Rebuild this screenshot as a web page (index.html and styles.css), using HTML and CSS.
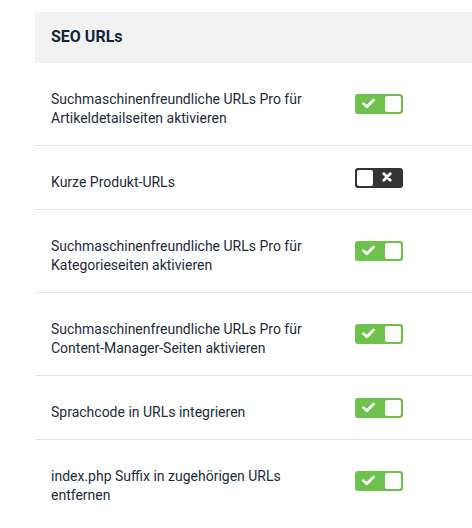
FILE: index.html
```html
<!DOCTYPE html>
<html lang="de">
<head>
<meta charset="utf-8">
<title>SEO URLs</title>
<link rel="stylesheet" href="styles.css">
</head>
<body>
<section class="panel">
  <h2 class="panel-title">SEO URLs</h2>
  <div class="row">
    <div class="label">Suchmaschinenfreundliche URLs Pro für Artikeldetailseiten aktivieren</div>
    <span class="toggle on"><svg class="icon" viewBox="0 0 12 10"><path d="M1.4 5.2 L4.5 8 L10.6 1.8" fill="none" stroke="#fff" stroke-width="2.6" stroke-linecap="round" stroke-linejoin="round"/></svg><span class="knob"></span></span>
  </div>
  <div class="row">
    <div class="label">Kurze Produkt-URLs</div>
    <span class="toggle off"><span class="knob"></span><svg class="icon x" viewBox="0 0 10 10"><path d="M1.8 1.8 L8.2 8.2 M8.2 1.8 L1.8 8.2" fill="none" stroke="#fff" stroke-width="2.8" stroke-linecap="round"/></svg></span>
  </div>
  <div class="row">
    <div class="label">Suchmaschinenfreundliche URLs Pro für Kategorieseiten aktivieren</div>
    <span class="toggle on"><svg class="icon" viewBox="0 0 12 10"><path d="M1.4 5.2 L4.5 8 L10.6 1.8" fill="none" stroke="#fff" stroke-width="2.6" stroke-linecap="round" stroke-linejoin="round"/></svg><span class="knob"></span></span>
  </div>
  <div class="row">
    <div class="label">Suchmaschinenfreundliche URLs Pro für Content-Manager-Seiten aktivieren</div>
    <span class="toggle on"><svg class="icon" viewBox="0 0 12 10"><path d="M1.4 5.2 L4.5 8 L10.6 1.8" fill="none" stroke="#fff" stroke-width="2.6" stroke-linecap="round" stroke-linejoin="round"/></svg><span class="knob"></span></span>
  </div>
  <div class="row">
    <div class="label">Sprachcode in URLs integrieren</div>
    <span class="toggle on"><svg class="icon" viewBox="0 0 12 10"><path d="M1.4 5.2 L4.5 8 L10.6 1.8" fill="none" stroke="#fff" stroke-width="2.6" stroke-linecap="round" stroke-linejoin="round"/></svg><span class="knob"></span></span>
  </div>
  <div class="row">
    <div class="label">index.php Suffix in zugehörigen URLs entfernen</div>
    <span class="toggle on"><svg class="icon" viewBox="0 0 12 10"><path d="M1.4 5.2 L4.5 8 L10.6 1.8" fill="none" stroke="#fff" stroke-width="2.6" stroke-linecap="round" stroke-linejoin="round"/></svg><span class="knob"></span></span>
  </div>
</section>
</body>
</html>
```
FILE: styles.css
```css
html, body {
  margin: 0;
  padding: 0;
  background: #ffffff;
}
body {
  font-family: Roboto, "Liberation Sans", sans-serif;
  color: #1d2b3a;
  overflow: hidden;
}
.panel {
  margin: 12px 0 0 35px;
}
.panel-title {
  margin: 0;
  height: 51px;
  box-sizing: border-box;
  background: #f2f2f2;
  padding: 0 16px;
  font-size: 16px;
  font-weight: 700;
  line-height: 50px;
  color: #13273a;
}
.row {
  display: flex;
  align-items: center;
  gap: 16px;
  padding: 17px 16px 17px 16px;
  border-bottom: 1px solid #e3e3e3;
}
.row:last-child {
  border-bottom: none;
}
.label {
  flex: 0 0 288px;
  font-size: 14px;
  line-height: 19px;
  padding-top: 10px;
  padding-bottom: 0;
}
.toggle {
  flex: 0 0 auto;
  width: 48px;
  height: 20px;
  box-sizing: border-box;
  border-radius: 3px;
  padding: 2px;
  display: flex;
  align-items: center;
}
.toggle.on {
  background: #6cc24a;
}
.toggle.off {
  background: #333333;
}
.knob {
  width: 16px;
  height: 16px;
  background: #ffffff;
  border-radius: 2px;
  margin-left: auto;
}
.toggle.off .knob {
  margin-left: 0;
}
.icon {
  width: 13px;
  height: 11px;
  margin-left: 5px;
  margin-top: -1px;
}
.icon.x {
  width: 10px;
  height: 10px;
  margin-left: 9px;
  margin-top: -2px;
}
```
